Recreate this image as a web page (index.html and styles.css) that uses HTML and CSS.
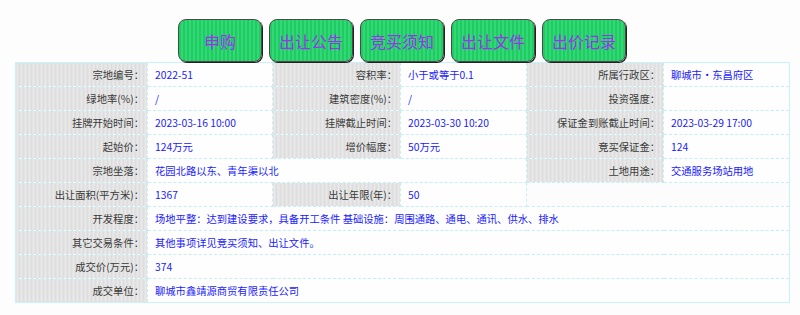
FILE: index.html
```html
<!DOCTYPE html>
<html lang="zh-CN">
<head>
<meta charset="utf-8">
<title>宗地信息</title>
<link rel="stylesheet" href="styles.css">
</head>
<body>
<div class="page">
  <div class="tabs">
    <a class="btn">申购</a>
    <a class="btn">出让公告</a>
    <a class="btn">竞买须知</a>
    <a class="btn">出让文件</a>
    <a class="btn">出价记录</a>
  </div>
  <table class="info">
    <colgroup>
      <col class="c-l1"><col class="c-v1"><col class="c-l2"><col class="c-v2"><col class="c-l3"><col class="c-v3">
    </colgroup>
    <tr>
      <th>宗地编号：</th><td>2022-51</td>
      <th>容积率：</th><td>小于或等于0.1</td>
      <th>所属行政区：</th><td>聊城市·东昌府区</td>
    </tr>
    <tr>
      <th>绿地率(%)：</th><td>/</td>
      <th>建筑密度(%)：</th><td>/</td>
      <th>投资强度：</th><td></td>
    </tr>
    <tr>
      <th>挂牌开始时间：</th><td>2023-03-16 10:00</td>
      <th>挂牌截止时间：</th><td>2023-03-30 10:20</td>
      <th>保证金到账截止时间：</th><td>2023-03-29 17:00</td>
    </tr>
    <tr>
      <th>起始价：</th><td>124万元</td>
      <th>增价幅度：</th><td>50万元</td>
      <th>竞买保证金：</th><td>124</td>
    </tr>
    <tr>
      <th>宗地坐落：</th><td colspan="3">花园北路以东、青年渠以北</td>
      <th>土地用途：</th><td>交通服务场站用地</td>
    </tr>
    <tr>
      <th>出让面积(平方米)：</th><td>1367</td>
      <th>出让年限(年)：</th><td>50</td>
      <td class="blank" colspan="2"></td>
    </tr>
    <tr>
      <th>开发程度：</th><td colspan="5">场地平整：达到建设要求，具备开工条件 基础设施：周围通路、通电、通讯、供水、排水</td>
    </tr>
    <tr>
      <th>其它交易条件：</th><td colspan="5">其他事项详见竞买须知、出让文件。</td>
    </tr>
    <tr>
      <th>成交价(万元)：</th><td colspan="5">374</td>
    </tr>
    <tr>
      <th>成交单位：</th><td colspan="5">聊城市鑫靖源商贸有限责任公司</td>
    </tr>
  </table>
</div>
</body>
</html>
```

FILE: styles.css
```css
html, body {
  margin: 0;
  padding: 0;
  background: #fdfdfd;
}
body {
  font-family: "Noto Sans CJK SC", "Noto Sans", sans-serif;
  font-size: 10.3px;
}
.page {
  width: 774px;
  padding: 19px 0 0 15px;
}
.tabs {
  display: flex;
  justify-content: center;
  gap: 7px;
  height: 43px;
}
.btn {
  box-sizing: border-box;
  width: 84px;
  height: 43px;
  display: flex;
  align-items: center;
  justify-content: center;
  border: 1.5px solid #4a4a4a;
  border-radius: 8px;
  background: repeating-linear-gradient(90deg, #20cc62 0 2px, #30d876 2px 4px);
  color: #9a32f0;
  font-size: 16px;
  box-shadow: 1px 1px 0 #222;
  cursor: pointer;
}
.info {
  width: 774px;
  table-layout: fixed;
  border-collapse: collapse;
  border: 1px solid #c6f2f8;
}
.c-l1 { width: 132px; }
.c-v1 { width: 125px; }
.c-l2 { width: 128px; }
.c-v2 { width: 126px; }
.c-l3 { width: 137px; }
.c-v3 { width: 126px; }
.info th,
.info td {
  height: 23px;
  padding: 0;
  border: 1px dashed #c6eef4;
  white-space: nowrap;
  overflow: hidden;
  font-weight: normal;
}
.info th {
  text-align: right;
  padding-right: 3px;
  color: #3a3a3a;
  background: repeating-linear-gradient(90deg, #e9e9e9 0 2px, #dddddd 2px 4px);
}
.info td {
  padding-left: 7px;
  color: #1a1aff;
  background: #fefefe;
}
.info td.blank {
  background: #fcfcfc;
}
```
